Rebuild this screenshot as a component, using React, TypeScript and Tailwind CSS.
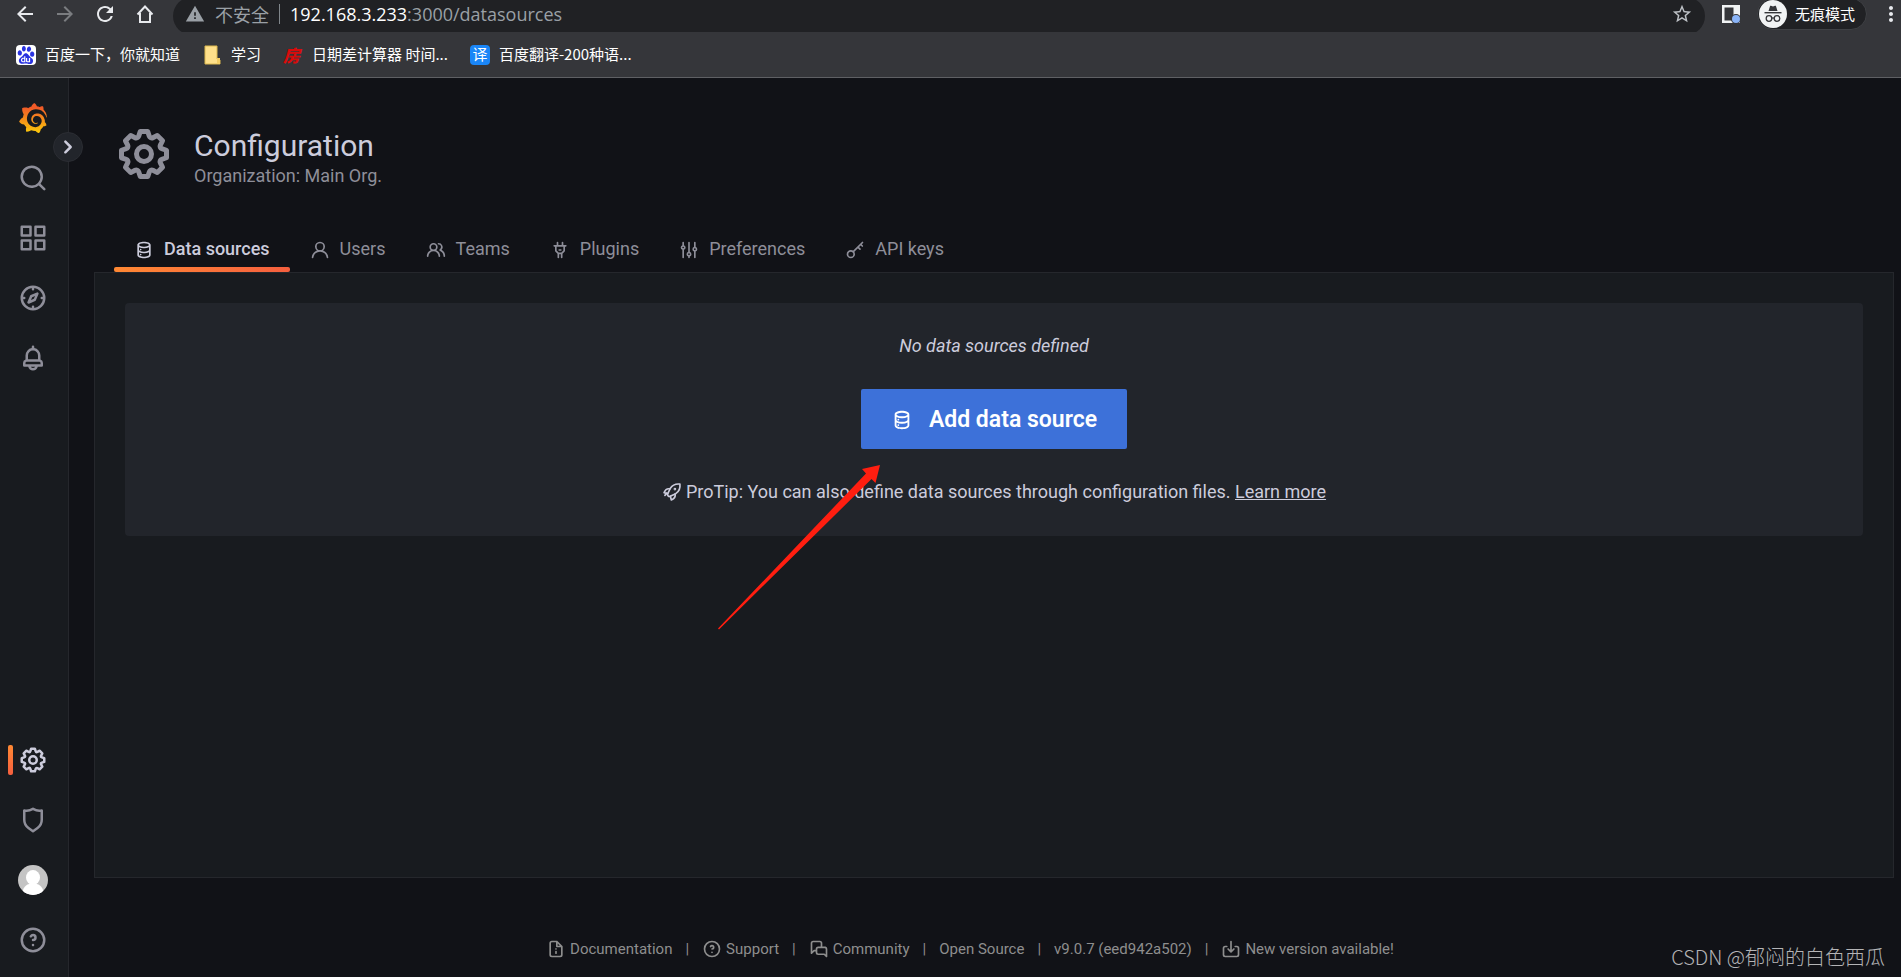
import type { ReactNode } from 'react';
import { MdArrowBack, MdArrowForward, MdMoreVert, MdRefresh, MdStarOutline, MdWarning } from 'react-icons/md';
import { SiBaidu, SiGrafana } from 'react-icons/si';

const ICONS = {
  search:
    'M21.71,20.29,18,16.61A9,9,0,1,0,16.61,18l3.68,3.68a1,1,0,0,0,1.42,0A1,1,0,0,0,21.71,20.29ZM11,18a7,7,0,1,1,7-7A7,7,0,0,1,11,18Z',
  apps:
    'M10,13H3a1,1,0,0,0-1,1v7a1,1,0,0,0,1,1h7a1,1,0,0,0,1-1V14A1,1,0,0,0,10,13ZM9,20H4V15H9ZM21,2H14a1,1,0,0,0-1,1v7a1,1,0,0,0,1,1h7a1,1,0,0,0,1-1V3A1,1,0,0,0,21,2ZM20,9H15V4h5Zm1,4H14a1,1,0,0,0-1,1v7a1,1,0,0,0,1,1h7a1,1,0,0,0,1-1V14A1,1,0,0,0,21,13Zm-1,7H15V15h5ZM10,2H3A1,1,0,0,0,2,3v7a1,1,0,0,0,1,1h7a1,1,0,0,0,1-1V3A1,1,0,0,0,10,2ZM9,9H4V4H9Z',
  compass:
    'M12,2A10,10,0,1,0,22,12,10,10,0,0,0,12,2Zm1,17.93V19a1,1,0,0,0-2,0v.93A8,8,0,0,1,4.07,13H5a1,1,0,0,0,0-2H4.07A8,8,0,0,1,11,4.07V5a1,1,0,0,0,2,0V4.07A8,8,0,0,1,19.93,11H19a1,1,0,0,0,0,2h.93A8,8,0,0,1,13,19.93ZM15.14,7.55l-5,2.12a1,1,0,0,0-.52.52l-2.12,5a1,1,0,0,0,.21,1.1,1,1,0,0,0,.7.3.93.93,0,0,0,.4-.09l5-2.12a1,1,0,0,0,.52-.52l2.12-5a1,1,0,0,0-1.31-1.31Zm-2.49,5.1-2.28,1,1-2.28,2.28-1Z',
  bell:
    'M18,13.18V10a6,6,0,0,0-5-5.91V3a1,1,0,0,0-2,0V4.09A6,6,0,0,0,6,10v3.18A3,3,0,0,0,4,16v2a1,1,0,0,0,1,1H8.14a4,4,0,0,0,7.72,0H19a1,1,0,0,0,1-1V16A3,3,0,0,0,18,13.18ZM8,10a4,4,0,0,1,8,0v3H8Zm4,10a2,2,0,0,1-1.72-1h3.44A2,2,0,0,1,12,20Zm6-3H6V16a1,1,0,0,1,1-1H17a1,1,0,0,1,1,1Z',
  cog:
    'M21.32,9.55l-1.89-.63.89-1.78A1,1,0,0,0,20.13,6L18,3.87a1,1,0,0,0-1.15-.19l-1.78.89-.63-1.89A1,1,0,0,0,13.5,2h-3a1,1,0,0,0-.95.68L8.92,4.57,7.14,3.68A1,1,0,0,0,6,3.87L3.87,6a1,1,0,0,0-.19,1.15l.89,1.78-1.89.63A1,1,0,0,0,2,10.5v3a1,1,0,0,0,.68.95l1.89.63-.89,1.78A1,1,0,0,0,3.87,18L6,20.13a1,1,0,0,0,1.15.19l1.78-.89.63,1.89a1,1,0,0,0,.95.68h3a1,1,0,0,0,.95-.68l.63-1.89,1.78.89A1,1,0,0,0,18,20.13L20.13,18a1,1,0,0,0,.19-1.15l-.89-1.78,1.89-.63A1,1,0,0,0,22,13.5v-3A1,1,0,0,0,21.32,9.55ZM20,12.78l-1.2.4A2,2,0,0,0,17.64,16l.57,1.14-1.1,1.1L16,17.64a2,2,0,0,0-2.79,1.16l-.4,1.2H11.22l-.4-1.2A2,2,0,0,0,8,17.64l-1.14.57-1.1-1.1L6.36,16A2,2,0,0,0,5.2,13.18L4,12.78V11.22l1.2-.4A2,2,0,0,0,6.36,8L5.79,6.89l1.1-1.1L8,6.36A2,2,0,0,0,10.82,5.2l.4-1.2h1.56l.4,1.2A2,2,0,0,0,16,6.36l1.14-.57,1.1,1.1L17.64,8a2,2,0,0,0,1.16,2.79l1.2.4ZM12,8a4,4,0,1,0,4,4A4,4,0,0,0,12,8Zm0,6a2,2,0,1,1,2-2A2,2,0,0,1,12,14Z',
  shield:
    'M19.63,3.65a1,1,0,0,0-.84-.2,8,8,0,0,1-6.22-1.27,1,1,0,0,0-1.14,0A8,8,0,0,1,5.21,3.45a1,1,0,0,0-.84.2A1,1,0,0,0,4,4.43v7.45a9,9,0,0,0,3.77,7.33l3.65,2.6a1,1,0,0,0,1.16,0l3.65-2.6A9,9,0,0,0,20,11.88V4.43A1,1,0,0,0,19.63,3.65ZM18,11.88a7,7,0,0,1-2.93,5.7L12,19.77,8.93,17.58A7,7,0,0,1,6,11.88V5.58a10,10,0,0,0,6-1.39,10,10,0,0,0,6,1.39Z',
  question:
    'M11.29,15.29a1.58,1.58,0,0,0-.12.15.76.76,0,0,0-.09.18.64.64,0,0,0-.06.18,1.36,1.36,0,0,0,0,.2.84.84,0,0,0,.08.38.9.9,0,0,0,.54.54.94.94,0,0,0,.76,0,.9.9,0,0,0,.54-.54A1,1,0,0,0,13,16a1,1,0,0,0-.29-.71A1,1,0,0,0,11.29,15.29ZM12,2A10,10,0,1,0,22,12,10,10,0,0,0,12,2Zm0,18a8,8,0,1,1,8-8A8,8,0,0,1,12,20ZM12,7A3,3,0,0,0,9.4,8.5a1,1,0,1,0,1.73,1A1,1,0,0,1,12,9a1,1,0,0,1,0,2,1,1,0,1,0,0,2,3,3,0,0,0,0-6Z',
  database:
    'M8,16.5a1,1,0,1,0,1,1A1,1,0,0,0,8,16.5ZM12,2C8,2,4,3.37,4,6V18c0,2.63,4,4,8,4s8-1.37,8-4V6C20,3.37,16,2,12,2Zm6,16c0,.71-2.28,2-6,2s-6-1.29-6-2V14.73A13.16,13.16,0,0,0,12,16a13.16,13.16,0,0,0,6-1.27Zm0-6c0,.71-2.28,2-6,2s-6-1.29-6-2V8.73A13.16,13.16,0,0,0,12,10a13.16,13.16,0,0,0,6-1.27ZM12,8C8.28,8,6,6.71,6,6s2.28-2,6-2,6,1.29,6,2S15.72,8,12,8ZM8,10.5a1,1,0,1,0,1,1A1,1,0,0,0,8,10.5Z',
  user:
    'M15.71,12.71a6,6,0,1,0-7.42,0,10,10,0,0,0-6.22,8.18,1,1,0,0,0,2,.22,8,8,0,0,1,15.9,0,1,1,0,0,0,1,.89h.11a1,1,0,0,0,.88-1.1A10,10,0,0,0,15.71,12.71ZM12,12a4,4,0,1,1,4-4A4,4,0,0,1,12,12Z',
  users:
    'M12.3,12.22A4.92,4.92,0,0,0,14,8.5a5,5,0,0,0-10,0,4.92,4.92,0,0,0,1.7,3.72A8,8,0,0,0,1,19.5a1,1,0,0,0,2,0,6,6,0,0,1,12,0,1,1,0,0,0,2,0A8,8,0,0,0,12.3,12.22ZM9,11.5a3,3,0,1,1,3-3A3,3,0,0,1,9,11.5Zm9.74.32A5,5,0,0,0,15,3.5a1,1,0,0,0,0,2,3,3,0,0,1,3,3,3,3,0,0,1-1.5,2.59,1,1,0,0,0-.5.84,1,1,0,0,0,.45.86l.39.26.13.07a7,7,0,0,1,4,6.38,1,1,0,0,0,2,0A9,9,0,0,0,18.74,11.82Z',
  plug:
    'M19,6H16V3a1,1,0,0,0-2,0V6H10V3A1,1,0,0,0,8,3V6H5A1,1,0,0,0,5,8H6v5a1,1,0,0,0,.29.71L9,16.41V21a1,1,0,0,0,2,0V17h2v4a1,1,0,0,0,2,0V16.41l2.71-2.7A1,1,0,0,0,18,13V8h1a1,1,0,0,0,0-2Zm-3,6.59L13.59,15H10.41L8,12.59V8h8ZM11,13h2a1,1,0,0,0,0-2H11a1,1,0,0,0,0,2Z',
  sliders:
    'M20,8.18V3a1,1,0,0,0-2,0V8.18a3,3,0,0,0,0,5.64V21a1,1,0,0,0,2,0V13.82a3,3,0,0,0,0-5.64ZM19,12a1,1,0,1,1,1-1A1,1,0,0,1,19,12Zm-6,2.18V3a1,1,0,0,0-2,0V14.18a3,3,0,0,0,0,5.64V21a1,1,0,0,0,2,0V19.82a3,3,0,0,0,0-5.64ZM12,18a1,1,0,1,1,1-1A1,1,0,0,1,12,18ZM6,6.18V3A1,1,0,0,0,4,3V6.18a3,3,0,0,0,0,5.64V21a1,1,0,0,0,2,0V11.82A3,3,0,0,0,6,6.18ZM5,10A1,1,0,1,1,6,9,1,1,0,0,1,5,10Z',
  comments:
    'M20,9H16V5a3,3,0,0,0-3-3H5A3,3,0,0,0,2,5V17a1,1,0,0,0,.62.92A.84.84,0,0,0,3,18a1,1,0,0,0,.71-.29l2.81-2.82H8v1.44a3,3,0,0,0,3,3h6.92l2.37,2.38A1,1,0,0,0,21,22a.84.84,0,0,0,.38-.08A1,1,0,0,0,22,21V12A3,3,0,0,0,20,9ZM8,12v.89H6.11a1,1,0,0,0-.71.29L4,14.59V5A1,1,0,0,1,5,4h8a1,1,0,0,1,1,1V9H11A3,3,0,0,0,8,12Zm12,6.59-1-1a1,1,0,0,0-.71-.3H11a1,1,0,0,1-1-1V12a1,1,0,0,1,1-1h8a1,1,0,0,1,1,1Z',
  document:
    'M20,8.94a1.31,1.31,0,0,0-.06-.27l0-.09a1.07,1.07,0,0,0-.19-.28h0l-6-6h0a1.07,1.07,0,0,0-.28-.19l-.1,0A1.1,1.1,0,0,0,13.06,2H7A3,3,0,0,0,4,5V19a3,3,0,0,0,3,3H17a3,3,0,0,0,3-3V9S20,9,20,8.94ZM14,5.41,16.59,8H14ZM18,19a1,1,0,0,1-1,1H7a1,1,0,0,1-1-1V5A1,1,0,0,1,7,4h5V9a1,1,0,0,0,1,1h5ZM12,14a1,1,0,0,0-1,1v2a1,1,0,0,0,2,0V15A1,1,0,0,0,12,14ZM11.2,11.4a1,1,0,1,0,1.6,0A1,1,0,0,0,11.2,11.4Z',
  angleRight:
    'M14.83,11.29,10.59,7.05a1,1,0,0,0-1.42,0,1,1,0,0,0,0,1.41L12.71,12,9.17,15.54a1,1,0,0,0,0,1.41,1,1,0,0,0,.71.29,1,1,0,0,0,.71-.29l4.24-4.24A1,1,0,0,0,14.83,11.29Z',
};

type IconName = keyof typeof ICONS;

const Icon = ({ name, className }: { name: IconName; className?: string }) => (
  <svg viewBox="0 0 24 24" fill="currentColor" className={className} aria-hidden="true">
    <path d={ICONS[name]} />
  </svg>
);

const LineIcon = ({ className, children }: { className?: string; children: ReactNode }) => (
  <svg
    viewBox="0 0 24 24"
    fill="none"
    stroke="currentColor"
    strokeWidth="2"
    strokeLinecap="round"
    strokeLinejoin="round"
    className={className}
    aria-hidden="true"
  >
    {children}
  </svg>
);

const KeyIcon = () => (
  <LineIcon className="size-5">
    <circle cx="7" cy="17" r="4" />
    <path d="M10 14 21 3M15.5 8.5l2.5 2.5M18.8 5.2l2 2" />
  </LineIcon>
);

const RocketIcon = () => (
  <LineIcon className="size-5">
    <path d="M21.500 2.500c-5-.6-9 1.200-11.500 5L6.800 14.200c-.8 1.800 1.200 3.800 3 3L16.500 14c3.800-2.500 5.600-6.500 5-11.500Z" />
    <path d="M9.500 8.300C6.500 7.600 4 9.200 2.500 12.800L6.800 14M15.700 14.500c.7 3-.9 5.500-4.500 7L10 17.200" />
    <path d="M5.800 13.500 3.500 16" />
    <circle cx="15.500" cy="8.500" r=".6" />
  </LineIcon>
);

const ImportIcon = () => (
  <LineIcon className="size-5">
    <path d="M12 3v12M8.500 12l3.500 3.500 3.500-3.500M7 9H5a2 2 0 0 0-2 2v8a2 2 0 0 0 2 2h14a2 2 0 0 0 2-2v-8a2 2 0 0 0-2-2h-2" />
  </LineIcon>
);

const Toolbar = () => (
  <div className="flex h-8 items-center overflow-hidden">
    <div className="flex w-[173px] shrink-0 items-center gap-4 pb-1 pl-[13px] text-[#e8eaed]">
      <button type="button" aria-label="后退">
        <MdArrowBack className="size-6" />
      </button>
      <button type="button" aria-label="前进" className="text-[#7b7d80]">
        <MdArrowForward className="size-6" />
      </button>
      <button type="button" aria-label="重新加载">
        <MdRefresh className="size-6" />
      </button>
      <button type="button" aria-label="主页">
        <svg viewBox="0 0 24 24" fill="none" stroke="currentColor" strokeWidth="2" className="size-6">
          <path d="M4.500 12.500 12 4.500l7.500 8M7 11v9h10v-9" />
        </svg>
      </button>
    </div>
    <div className="flex h-[38px] flex-1 items-center rounded-full bg-[#202124] px-3 text-lg">
      <div className="flex flex-1 items-center pb-1">
        <MdWarning className="size-5 text-[#9aa0a6]" />
        <span className="ml-[10px] text-[#9aa0a6]">不安全</span>
        <span className="mx-[10px] h-5 w-px bg-[#80868b]" />
        <span className="font-['Open_Sans',sans-serif] text-[#9aa0a6]">
          <span className="text-white">192.168.3.233</span>:3000/datasources
        </span>
      </div>
      <button type="button" aria-label="收藏" className="pb-1 text-[#bdc1c6]">
        <MdStarOutline className="size-[22px]" />
      </button>
    </div>
    <button type="button" aria-label="侧边栏" className="mx-4 pb-1">
      <svg viewBox="0 0 20 20" className="size-5">
        <path d="M1 1h18v18H1Z" fill="#f1f3f4" />
        <path d="M3.500 3.500h9v13h-9Z" fill="#35363a" />
        <circle cx="15" cy="15" r="5" fill="#35363a" />
        <circle cx="15" cy="15" r="4" fill="#8ab4f8" />
      </svg>
    </button>
    <div className="mb-1 flex h-8 items-center gap-2 rounded-full border border-[#3f4145] bg-[#202124] pr-[11px] pl-px text-[15px] text-white">
      <svg viewBox="0 0 28 28" className="size-7">
        <circle cx="14" cy="14" r="14" fill="#f1f3f4" />
        <g fill="#35363a">
          <path d="M9.500 11 11 6.200c.2-.5.6-.6 1-.4l2 .7 2-.7c.4-.2.8-.1 1 .4l1.500 4.800Z" />
          <path d="M5.500 12h17v1.400h-17Z" />
        </g>
        <g fill="none" stroke="#35363a" strokeWidth="1.300">
          <circle cx="10" cy="18.500" r="2.800" />
          <circle cx="18" cy="18.500" r="2.800" />
          <path d="M12.800 18.200q1.200-.8 2.400 0" />
        </g>
      </svg>
      <span>无痕模式</span>
    </div>
    <button type="button" aria-label="更多" className="-mr-0.5 ml-3 pb-1 text-[#e8eaed]">
      <MdMoreVert className="size-6" />
    </button>
  </div>
);

const Bookmarks = () => (
  <nav className="flex flex-1 items-center gap-[22px] pl-4 text-[15px] text-white">
    <a href="#" className="flex items-center gap-[9px]">
      <span className="flex size-5 items-center justify-center rounded-sm bg-white">
        <SiBaidu className="size-[18px] text-[#2932e1]" />
      </span>
      百度一下，你就知道
    </a>
    <a href="#" className="flex items-center gap-[9px]">
      <svg viewBox="0 0 20 20" className="size-5">
        <path d="M3 1h12v13l3 1v4H3Z" fill="#ffe08a" stroke="#dcb84e" />
        <path d="M15 13h3v6h-3Z" fill="#f4cd63" />
      </svg>
      学习
    </a>
    <a href="#" className="flex items-center gap-[9px]">
      <span className="w-5 text-[17px] leading-5 font-black text-[#d90b0b] italic">房</span>
      日期差计算器 时间...
    </a>
    <a href="#" className="flex items-center gap-[9px]">
      <span className="flex size-5 items-center justify-center rounded-sm bg-[#1a86f7]">译</span>
      百度翻译-200种语...
    </a>
  </nav>
);

const NavButton = ({ name, label, active }: { name: IconName; label: string; active?: boolean }) => (
  <button
    type="button"
    aria-label={label}
    className={`relative flex h-[60px] items-center justify-center ${active ? 'text-[#ccccdc]' : 'text-[#8e8e99]'}`}
  >
    {active && (
      <span className="absolute left-2 h-[30px] w-[5px] rounded-xs bg-linear-to-b from-[#ff8833] to-[#f55f3e]" />
    )}
    <Icon name={name} className="size-[30px]" />
  </button>
);

const Sidebar = () => (
  <aside className="relative flex w-[69px] shrink-0 flex-col border-r border-[#25272c] bg-[#181b1f] pt-[10px] pr-[2px] pb-[7px]">
    <a href="#" aria-label="Grafana" className="flex h-[60px] items-center justify-center">
      <svg className="absolute size-0">
        <defs>
          <linearGradient id="grafana" x1="0" y1="0" x2="0" y2="1">
            <stop offset="0.150" stopColor="#f05a28" />
            <stop offset="1" stopColor="#fbca0a" />
          </linearGradient>
        </defs>
      </svg>
      <SiGrafana className="size-[30px]" fill="url(#grafana)" />
    </a>
    <NavButton name="search" label="Search" />
    <NavButton name="apps" label="Dashboards" />
    <NavButton name="compass" label="Explore" />
    <NavButton name="bell" label="Alerting" />
    <div className="flex-1" />
    <NavButton name="cog" label="Configuration" active />
    <NavButton name="shield" label="Server admin" />
    <button type="button" aria-label="Profile" className="flex h-[60px] items-center justify-center">
      <svg viewBox="0 0 30 30" className="size-[30px] rounded-full">
        <path d="M0 0h30v30H0Z" fill="#c4c4c4" />
        <ellipse cx="15" cy="12.500" rx="7" ry="7.500" fill="#fff" />
        <path d="M4.500 27c1-6 5-8.500 10.500-8.500S24.500 21 25.500 27L22 30H8Z" fill="#fff" />
      </svg>
    </button>
    <NavButton name="question" label="Help" />
    <button
      type="button"
      aria-label="Expand menu"
      className="absolute top-[54px] -right-[15px] z-10 flex size-[30px] items-center justify-center rounded-full border border-[#2b2d33] bg-[#22252b] text-[#ccccdc]"
    >
      <Icon name="angleRight" className="size-[30px] shrink-0" />
    </button>
  </aside>
);

const tabs: { label: string; icon: ReactNode }[] = [
  { label: 'Data sources', icon: <Icon name="database" className="size-5" /> },
  { label: 'Users', icon: <Icon name="user" className="size-5" /> },
  { label: 'Teams', icon: <Icon name="users" className="size-5" /> },
  { label: 'Plugins', icon: <Icon name="plug" className="size-5" /> },
  { label: 'Preferences', icon: <Icon name="sliders" className="size-5" /> },
  { label: 'API keys', icon: <KeyIcon /> },
];

const footerLinks: { label: string; icon?: ReactNode }[] = [
  { label: 'Documentation', icon: <Icon name="document" className="size-5" /> },
  { label: 'Support', icon: <Icon name="question" className="size-5" /> },
  { label: 'Community', icon: <Icon name="comments" className="size-5" /> },
  { label: 'Open Source' },
  { label: 'v9.0.7 (eed942a502)' },
  { label: 'New version available!', icon: <ImportIcon /> },
];

const EmptyState = () => (
  <section className="relative flex flex-col items-center rounded-sm bg-[#22252b] pt-[31px] pb-8 text-lg leading-6 text-[#ccccdc]">
    <p className="italic">No data sources defined</p>
    <button
      type="button"
      className="my-[31px] flex h-[60px] items-center gap-4 rounded-xs bg-[#3d71d9] px-[30px] pt-0.5 text-[23px] font-semibold text-white"
    >
      <Icon name="database" className="size-[22px]" />
      Add data source
    </button>
    <p className="flex items-center gap-1">
      <RocketIcon />
      <span>
        ProTip: You can also define data sources through configuration files.{' '}
        <a href="#" className="underline">
          Learn more
        </a>
      </span>
    </p>
    <svg
      viewBox="0 0 164 166"
      className="absolute top-[161px] left-[calc(50%-277px)] h-[166px] w-[164px]"
      fill="#ff1e10"
      aria-hidden="true"
    >
      <path d="M163 1 145 5l4 4.500L1 164.500l1 1L154.500 15l4 4Z" />
    </svg>
  </section>
);

export default function App() {
  return (
    <div className="relative flex h-screen flex-col overflow-hidden bg-[#111217] font-['Roboto','Noto_Sans_CJK_SC',sans-serif]">
      <header className="flex h-[78px] shrink-0 flex-col border-b border-[#5f6064] bg-[#35363a] font-['Noto_Sans_CJK_SC',sans-serif]">
        <Toolbar />
        <Bookmarks />
      </header>

      <div className="flex min-h-0 flex-1">
        <Sidebar />

        <main className="flex min-w-0 flex-1 flex-col pr-[7px] pl-[25px]">
          {/* Page header */}
          <div className="flex items-start gap-5 pt-[46px] pl-5 text-[#8e8e99]">
            <Icon name="cog" className="size-[60px]" />
            <div className="pt-1">
              <h1 className="text-[30px] leading-9 text-[#ccccdc]">Configuration</h1>
              <p className="text-lg leading-6">Organization: Main Org.</p>
            </div>
          </div>

          <div role="tablist" className="mt-[39px] flex pl-5 text-lg text-[#8e8e99]">
            {tabs.map((tab, i) => (
              <button
                key={tab.label}
                type="button"
                role="tab"
                aria-selected={i === 0}
                className={`relative flex h-[45px] items-center gap-[10px] px-5 ${i === 0 ? 'font-medium text-[#ccccdc]' : ''}`}
              >
                {tab.icon}
                <span className="pb-0.5">{tab.label}</span>
                {i === 0 && (
                  <span className="absolute inset-x-0 bottom-0 h-[5px] rounded-xs bg-linear-to-r from-[#ff8833] to-[#f55f3e]" />
                )}
              </button>
            ))}
          </div>

          <div className="flex-1 border border-[#25272c] bg-[#181b1f] p-[30px]">
            <EmptyState />
          </div>

          <footer className="flex h-[99px] items-center justify-center pt-[43px] pr-12 text-[15px] text-[#8e8e8e]">
            {footerLinks.map((link, i) => (
              <div key={link.label} className="flex items-center">
                {i > 0 && <span className="mx-[13px]">|</span>}
                <a href="#" className="flex items-center gap-1">
                  {link.icon}
                  {link.label}
                </a>
              </div>
            ))}
          </footer>
        </main>
      </div>

      <span className="absolute right-4 bottom-1.5 font-['Noto_Sans_CJK_SC',sans-serif] text-xl font-light text-[#b4b4b6]">
        CSDN @郁闷的白色西瓜
      </span>
    </div>
  );
}
